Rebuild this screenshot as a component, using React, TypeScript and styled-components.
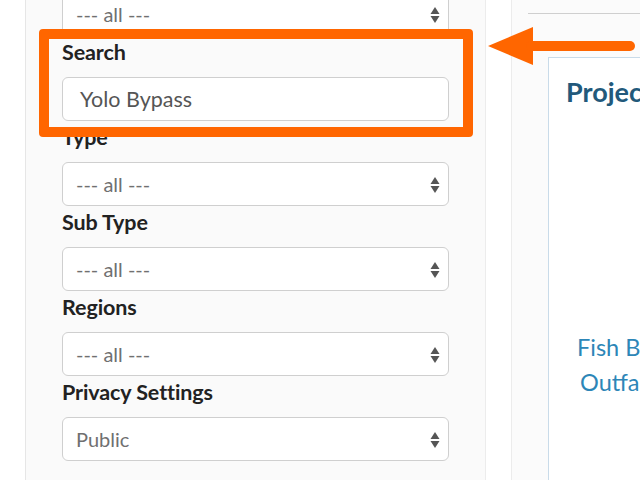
import React from "react";
import styled, { createGlobalStyle } from "styled-components";

const Global = createGlobalStyle`
  html, body { margin: 0; padding: 0; background: #fff; }
  body { width: 640px; height: 480px; overflow: hidden; font-family: Lato, "Open Sans", sans-serif; }
`;

const Page = styled.div`
  position: relative;
  display: flex;
  width: 640px;
  height: 480px;
  overflow: hidden;
  background: #fff;
`;

const Gutter = styled.div`
  width: 25px;
  flex: none;
  background: #fff;
`;

const Sidebar = styled.aside`
  flex: none;
  background: #fafafa;
  border-left: 1px solid #e6e6e6;
  border-right: 1px solid #ececec;
  padding: 0 35px 0 36px;
  box-sizing: border-box;
  width: 461px;
`;

const Form = styled.div`
  margin-top: -8px;
  display: flex;
  flex-direction: column;
`;

const Group = styled.div`
  display: flex;
  flex-direction: column;
`;

const Label = styled.label`
  display: block;
  margin: 4px 0 13px;
  font-size: 21.5px;
  line-height: 24px;
  font-weight: 700;
  color: #222;
  letter-spacing: -0.1px;
`;

const Field = styled.div<{ $pad: number; $color?: string; $size?: number }>`
  position: relative;
  width: 387px;
  height: 44px;
  box-sizing: border-box;
  border: 1px solid #cfcfcf;
  border-radius: 6px;
  background: #fff;
  display: flex;
  align-items: center;
  padding: 0 0 0 ${(p) => p.$pad}px;
  font-size: ${(p) => p.$size || 20}px;
  color: ${(p) => p.$color || "#666"};
`;

const Caret = styled.svg`
  position: absolute;
  right: 6px;
  top: 12px;
`;

const Gap = styled.div`
  width: 25px;
  flex: none;
  background: #fff;
`;

const Right = styled.section`
  flex: 1;
  background: #fbfbfb;
  border-left: 1px solid #ececec;
  padding-left: 16px;
`;

const TopRule = styled.div`
  height: 13px;
  border-bottom: 1px solid #cfcfcf;
`;

const Card = styled.div`
  margin: 43px 0 0 20px;
  width: 300px;
  height: 500px;
  background: #fff;
  border: 1px solid #c9dbe9;
  border-right: none;
  padding: 14px 0 0 17px;
  box-sizing: border-box;
`;

const Heading = styled.h2`
  margin: 0;
  font-size: 27px;
  line-height: 40px;
  font-weight: 700;
  color: #22597b;
  white-space: nowrap;
`;

const LinkText = styled.a`
  display: block;
  margin: 218px 0 0 11px;
  font-size: 23.5px;
  line-height: 35px;
  color: #2d86b7;
  text-decoration: none;
  white-space: nowrap;
`;

const LinkLine = styled.span<{ $indent: number }>`
  display: block;
  padding-left: ${(p) => p.$indent}px;
`;

const Highlight = styled.div`
  position: absolute;
  left: 39px;
  top: 29px;
  width: 434px;
  height: 108px;
  box-sizing: border-box;
  border: 10px solid #ff6600;
  border-radius: 4px;
  pointer-events: none;
`;

const Arrow = styled.svg`
  position: absolute;
  left: 486px;
  top: 24px;
`;

const SelectCaret = () => (
  <Caret width="14" height="20" viewBox="0 0 14 20">
    <path d="M7 2 L11.5 9 H2.5 Z" fill="#555" />
    <path d="M7 18 L11.5 11 H2.5 Z" fill="#555" />
  </Caret>
);

const Select = ({ value }: { value: string }) => (
  <Field $pad={13} $color="#707070" $size={20}>
    {value}
    <SelectCaret />
  </Field>
);

const groups = [
  { label: "Type", value: "--- all ---" },
  { label: "Sub Type", value: "--- all ---" },
  { label: "Regions", value: "--- all ---" },
  { label: "Privacy Settings", value: "Public" },
];

export default function App() {
  return (
    <>
      <Global />
      <Page>
        <Gutter />
        <Sidebar>
          <Form>
            <Select value="--- all ---" />
            <Group>
              <Label>Search</Label>
              <Field $pad={17} $color="#555" $size={21.5}>
                Yolo Bypass
              </Field>
            </Group>
            {groups.map((g) => (
              <Group key={g.label}>
                <Label>{g.label}</Label>
                <Select value={g.value} />
              </Group>
            ))}
          </Form>
        </Sidebar>
        <Gap />
        <Right>
          <TopRule />
          <Card>
            <Heading>Projects</Heading>
            <LinkText href="#">
              <LinkLine $indent={0}>Fish Bypass</LinkLine>
              <LinkLine $indent={3}>Outfall</LinkLine>
            </LinkText>
          </Card>
        </Right>
        <Highlight />
        <Arrow width="154" height="44" viewBox="0 0 154 44">
          <path d="M2 22 L47 3 V41 Z" fill="#ff6600" />
          <path d="M45 22 H144" stroke="#ff6600" strokeWidth="10" strokeLinecap="round" />
        </Arrow>
      </Page>
    </>
  );
}
